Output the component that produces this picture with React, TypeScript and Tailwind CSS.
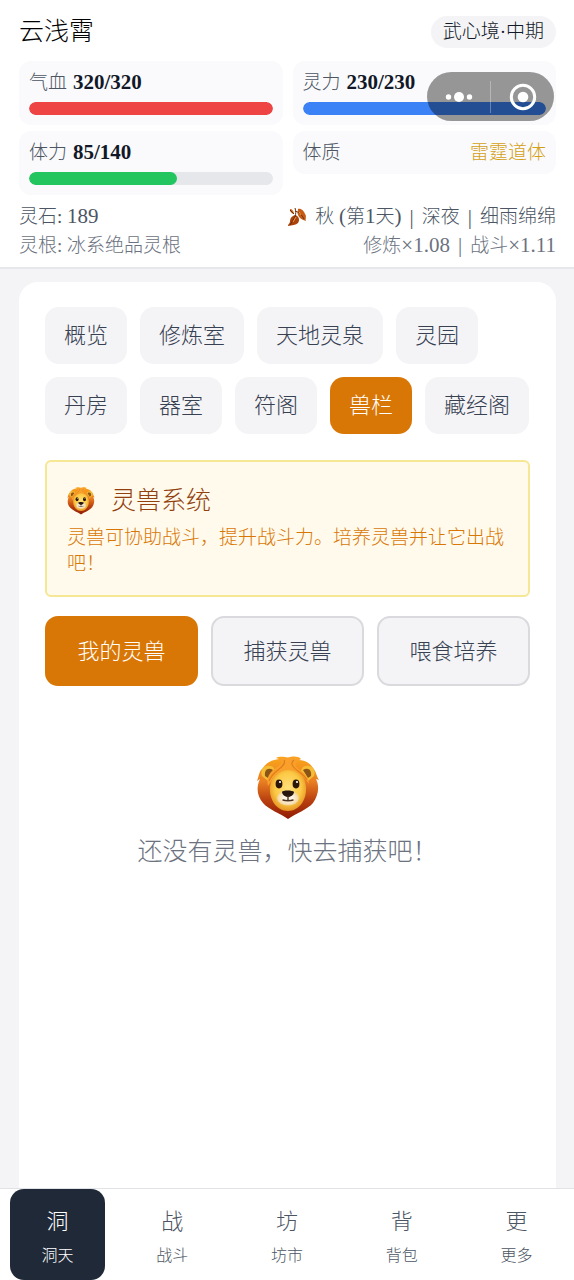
import React from 'react';
import clsx from 'clsx';

interface StatCardProps {
  label: string;
  current: number;
  max: number;
  barClass: string;
}

const places = ['概览', '修炼室', '天地灵泉', '灵园', '丹房', '器室', '符阁', '兽栏', '藏经阁'];

const beastTabs = ['我的灵兽', '捕获灵兽', '喂食培养'];

const navItems = [
  { icon: '洞', label: '洞天' },
  { icon: '战', label: '战斗' },
  { icon: '坊', label: '坊市' },
  { icon: '背', label: '背包' },
  { icon: '更', label: '更多' },
];

const LionIcon: React.FC<{ className?: string }> = ({ className }) => (
  <svg className={className} viewBox="0 0 64 64" aria-hidden="true">
    <defs>
      <linearGradient id="mane" x1="0" y1="0" x2="0" y2="1">
        <stop offset="0" stopColor="#fba51c" />
        <stop offset="0.4" stopColor="#e97f22" />
        <stop offset="0.7" stopColor="#b9400f" />
        <stop offset="1" stopColor="#8f1b05" />
      </linearGradient>
      <radialGradient id="face" cx="0.5" cy="0.45" r="0.6">
        <stop offset="0" stopColor="#ffe07a" />
        <stop offset="0.6" stopColor="#fcc945" />
        <stop offset="1" stopColor="#e08a1d" />
      </radialGradient>
      <radialGradient id="muzzle">
        <stop offset="0.4" stopColor="#fff6e6" />
        <stop offset="1" stopColor="#f2d49a" />
      </radialGradient>
    </defs>
    <path
      d="M20 2C24 0 29 1 32 2C36 0 42 0 45 3C43 3 42 4 42 4C49 4 54 7 57 12C60 15 60 19 63 24L60 23C64 31 62 40 57 47C51 54 40 57 32 63C24 57 13 54 7 47C1 40 0 31 4 23L1 25C3 20 3 15 7 12C10 7 15 4 23 3Z"
      fill="url(#mane)"
    />
    <path d="M6 20C3 13 10 7 17 11L20 16L12 25Z" fill="#f5bd35" />
    <path d="M58 20C61 13 54 7 47 11L44 16L52 25Z" fill="#f5bd35" />
    <path d="M9 20C8 14 12 11 17 14L12 22Z" fill="#8b5518" />
    <path d="M55 20C56 14 52 11 47 14L52 22Z" fill="#8b5518" />
    <path d="M32 13C43 12 49 21 50 31C51 44 43 55 32 55C21 55 13 44 14 31C15 21 21 13 32 13Z" fill="url(#face)" />
    <path d="M23 3C30 1 40 1 45 4C37 6 38 10 44 14C49 18 52 21 53 28C47 19 39 14 32 14C25 14 18 19 12 30C10 21 14 16 20 12C26 8 27 6 23 3Z" fill="#f9a02b" />
    <path d="M38 4C34 7 36 11 42 15C46 18 49 20 51 24M28 4C30 7 27 10 22 14C18 17 15 20 13 25" stroke="#e17d1c" strokeWidth="1.2" fill="none" />
    <ellipse cx="32" cy="42" rx="11" ry="7.5" fill="url(#muzzle)" />
    <ellipse cx="23" cy="28" rx="3.4" ry="4.4" fill="#2b1708" />
    <ellipse cx="40" cy="28" rx="3.4" ry="4.4" fill="#2b1708" />
    <circle cx="24" cy="26" r="1.1" fill="#fff" />
    <circle cx="41" cy="26" r="1.1" fill="#fff" />
    <path d="M26 36C26 34 37 34 38 36C38 39 34 41 32 41C30 41 26 39 26 36Z" fill="#26160f" />
    <path d="M32 40V44M27 44C29 45 35 45 37 44" stroke="#4f3220" strokeWidth="1.4" fill="none" strokeLinecap="round" />
  </svg>
);

const LeafIcon: React.FC = () => (
  <svg className="w-5 h-5 shrink-0" viewBox="0 0 20 20" aria-hidden="true">
    <path d="M11 2C14 1 17 4 18 7C20 9 18 12 19 14C15 13 12 11 11 8C10 6 11 4 11 2Z" fill="#c65d17" />
    <path d="M8 8C12 9 13 13 11 16C9 18 5 18 1 19C1 17 3 17 3 14C3 11 5 9 8 8Z" fill="#a9420c" />
    <path d="M3 2C5 2 7 4 7 7C5 7 4 5 3 4Z" fill="#cf681c" />
    <path d="M8 1C9 4 9 7 8 10L3 18M8 4C12 5 15 8 17 12M3 3L7 7" stroke="#6f2c0a" fill="none" />
    <path d="M9 10L6 15M12 5L14 8" stroke="#ef9a3b" fill="none" />
  </svg>
);

const Num: React.FC<{ children: React.ReactNode }> = ({ children }) => <span className="text-[21px]">{children}</span>;

const Divider = () => <span className="mx-2 text-[21px]">|</span>;

const StatCard: React.FC<StatCardProps> = ({ label, current, max, barClass }) => (
  <div className="rounded-xl bg-[#fafafc] px-[10px] pt-2 pb-[10px]">
    <div className="flex items-center gap-1.5 leading-[27px]">
      <span className="text-[#4b5563]">{label}</span>
      <span className="text-[21px] font-bold text-[#111827]">{current}/{max}</span>
    </div>
    <div className="mt-1.5 h-[13px] overflow-hidden rounded-full bg-gray-200">
      <div className={clsx('h-full rounded-full', barClass)} style={{ width: `${(current / max) * 100}%` }} />
    </div>
  </div>
);

const MiniProgramCapsule = () => (
  <div className="fixed top-[72px] right-5 z-20 flex h-[49px] w-[127px] items-center rounded-full bg-black/40 text-white">
    <button type="button" aria-label="更多操作" className="flex flex-1 justify-center">
      <svg width="28" height="12" viewBox="0 0 28 12" fill="currentColor">
        <circle cx="3.5" cy="6" r="2.7" />
        <circle cx="14" cy="6" r="5" />
        <circle cx="24.5" cy="6" r="2.7" />
      </svg>
    </button>
    <div className="h-8 w-px bg-white/30" />
    <button type="button" aria-label="关闭" className="flex flex-1 justify-center">
      <svg width="28" height="28" viewBox="0 0 28 28">
        <circle cx="14" cy="14" r="11.7" stroke="currentColor" strokeWidth="3" fill="none" />
        <circle cx="14" cy="14" r="5.3" fill="currentColor" />
      </svg>
    </button>
  </div>
);

const Header = () => (
  <header className="border-b-2 border-[#e5e7eb] bg-white pt-4 pr-[18px] pb-[7px] pl-[19px]">
    <div className="flex items-center justify-between">
      <h1 className="text-[25px] leading-8 text-black">云浅霄</h1>
      <span className="rounded-full bg-[#f4f4f7] px-3 leading-8 text-[#111827]">武心境·中期</span>
    </div>

    <div className="mt-[13px] grid grid-cols-2 items-start gap-x-[10px] gap-y-[6px]">
      <StatCard label="气血" current={320} max={320} barClass="bg-[#ef4444]" />
      <StatCard label="灵力" current={230} max={230} barClass="bg-[#3b82f6]" />
      <StatCard label="体力" current={85} max={140} barClass="bg-[#22c55e]" />
      <div className="flex justify-between rounded-xl bg-[#fafafc] px-[10px] py-2 leading-[27px]">
        <span className="text-[#4b5563]">体质</span>
        <span className="text-[#d4a017]">雷霆道体</span>
      </div>
    </div>

    <div className="mt-[7px] flex items-center justify-between leading-7 text-[#4b5563]">
      <span>灵石: <Num>189</Num></span>
      <span className="flex items-center">
        <LeafIcon />
        <span className="ml-2">秋 <Num>(</Num>第<Num>1</Num>天<Num>)</Num></span>
        <Divider />
        深夜
        <Divider />
        细雨绵绵
      </span>
    </div>
    <div className="flex items-center justify-between leading-7 text-[#6b7280]">
      <span>灵根: 冰系绝品灵根</span>
      <span>修炼<Num>×1.08</Num><Divider />战斗<Num>×1.11</Num></span>
    </div>
  </header>
);

const BeastPanel = () => (
  <section>
    <div className="mt-[26px] rounded-md border-2 border-[#f5e794] bg-[#fffaeb] px-5 pt-[21px] pb-[18px]">
      <h2 className="flex items-center gap-4 text-[25px] leading-9 text-[#92400e]">
        <LionIcon className="h-7 w-7" />
        灵兽系统
      </h2>
      <p className="mt-1.5 leading-[26px] text-[#d97706]">灵兽可协助战斗，提升战斗力。培养灵兽并让它出战吧！</p>
    </div>

    <div className="mt-[19px] grid grid-cols-3 gap-[13px]">
      {beastTabs.map((tab) => (
        <button
          key={tab}
          type="button"
          className={clsx(
            'h-[70px] rounded-[13px] border-2 text-[22px]',
            tab === '我的灵兽' ? 'border-[#d97706] bg-[#d97706] text-white' : 'border-[#dadade] bg-[#f4f4f7] text-[#374151]'
          )}
        >
          {tab}
        </button>
      ))}
    </div>

    <div className="flex flex-col items-center pt-[70px] text-[#6b7280]">
      <LionIcon className="h-16 w-16" />
      <p className="mt-3 text-[25px] leading-10">还没有灵兽，快去捕获吧！</p>
    </div>
  </section>
);

const BottomNav = () => (
  <nav className="sticky bottom-0 grid grid-cols-5 border-t border-[#e0e2e6] bg-white">
    {navItems.map(({ icon, label }) => (
      <button
        key={label}
        type="button"
        className={clsx(
          'mx-[10px] flex h-[91px] flex-col items-center justify-center gap-1.5 rounded-[14px] pt-1',
          label === '洞天' ? 'bg-[#1f2937] text-white' : 'text-[#4b5563]'
        )}
      >
        <span className="text-[22px] leading-8">{icon}</span>
        <span className="text-base leading-6">{label}</span>
      </button>
    ))}
  </nav>
);

const App: React.FC = () => (
  <div className="flex min-h-screen flex-col bg-[#f4f4f7] font-['Liberation_Serif','Noto_Sans_CJK_SC',serif] text-[19px] font-light">
    <Header />
    <MiniProgramCapsule />
    <main className="mt-[13px] mr-[18px] ml-[19px] flex-1 rounded-t-[19px] bg-white px-[26px] pt-[25px]">
      <div className="flex flex-wrap gap-[13px]">
        {places.map((place) => (
          <button
            key={place}
            type="button"
            className={clsx(
              'h-[57px] rounded-[14px] px-[19px] text-[22px]',
              place === '兽栏' ? 'bg-[#d97706] text-white' : 'bg-[#f4f4f7] text-[#374151]'
            )}
          >
            {place}
          </button>
        ))}
      </div>
      <BeastPanel />
    </main>
    <BottomNav />
  </div>
);

export default App;
